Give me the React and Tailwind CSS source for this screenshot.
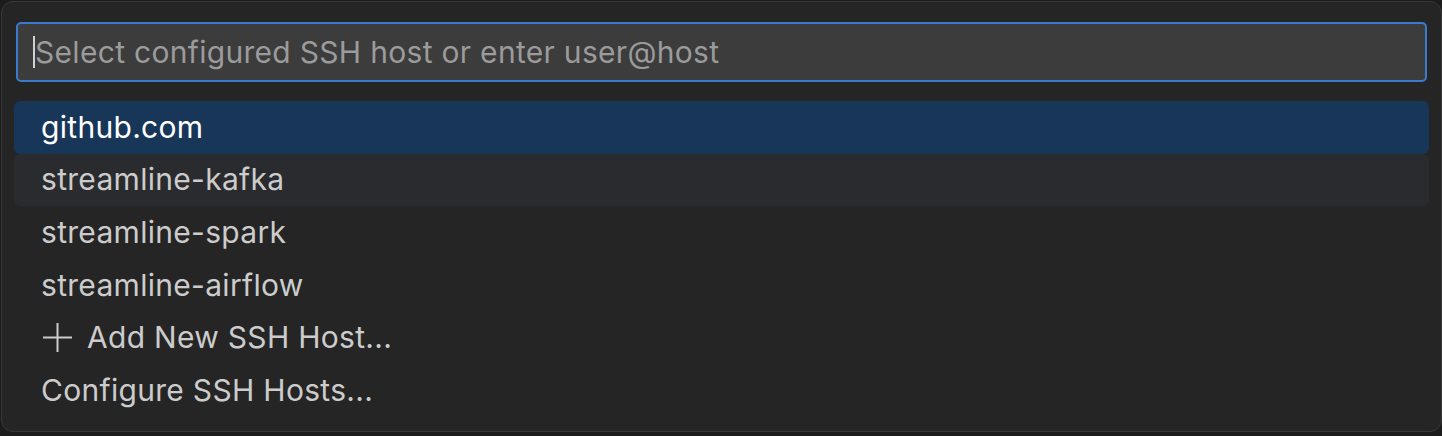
const hosts = ["github.com", "streamline-kafka", "streamline-spark", "streamline-airflow"];

export default function App() {
  return (
    <div
      className="h-[436px] w-[1442px] bg-[#1c1c1c] pt-px pl-px"
      style={{ fontFamily: "Inter, 'Noto Sans', sans-serif" }}
    >
      <div className="h-[431px] w-[1441px] rounded-[12px] border border-[#383838] bg-[#252525] px-[12px] pt-[20px]">
        <div className="mx-[2px] flex h-[60px] items-center rounded-[5px] border-2 border-[#3a7bd0] bg-[#3c3c3c] pl-[15px]">
          <span className="h-[32px] w-[2px] shrink-0 bg-[#d0d0d0]" />
          <input
            readOnly
            placeholder="Select configured SSH host or enter user@host"
            className="w-full bg-transparent text-[30px] tracking-[0.3px] text-[#cccccc] outline-none placeholder:text-[#9b9b9b]"
          />
        </div>
        <ul className="mt-[19px] flex flex-col tracking-[0.3px]">
          {hosts.map((h, i) => (
            <li
              key={h}
              className={`flex h-[52.6px] items-center rounded-[6px] pl-[27px] text-[30px] ${
                i === 0
                  ? "bg-[#173658] text-white"
                  : i === 1
                  ? "bg-[#2a2b2e] text-[#cccccc]"
                  : "text-[#cccccc]"
              }`}
            >
              {h}
            </li>
          ))}
          <li className="flex h-[52.6px] items-center gap-[14px] pl-[28px] text-[30px] text-[#cccccc]">
            <svg width="31" height="31" viewBox="0 0 31 31" fill="none" stroke="#cccccc" strokeWidth="2">
              <path d="M15.5 1v29M1 15.5h29" />
            </svg>
            Add New SSH Host...
          </li>
          <li className="flex h-[52.6px] items-center pl-[27px] text-[30px] text-[#cccccc]">
            Configure SSH Hosts...
          </li>
        </ul>
      </div>
    </div>
  );
}
